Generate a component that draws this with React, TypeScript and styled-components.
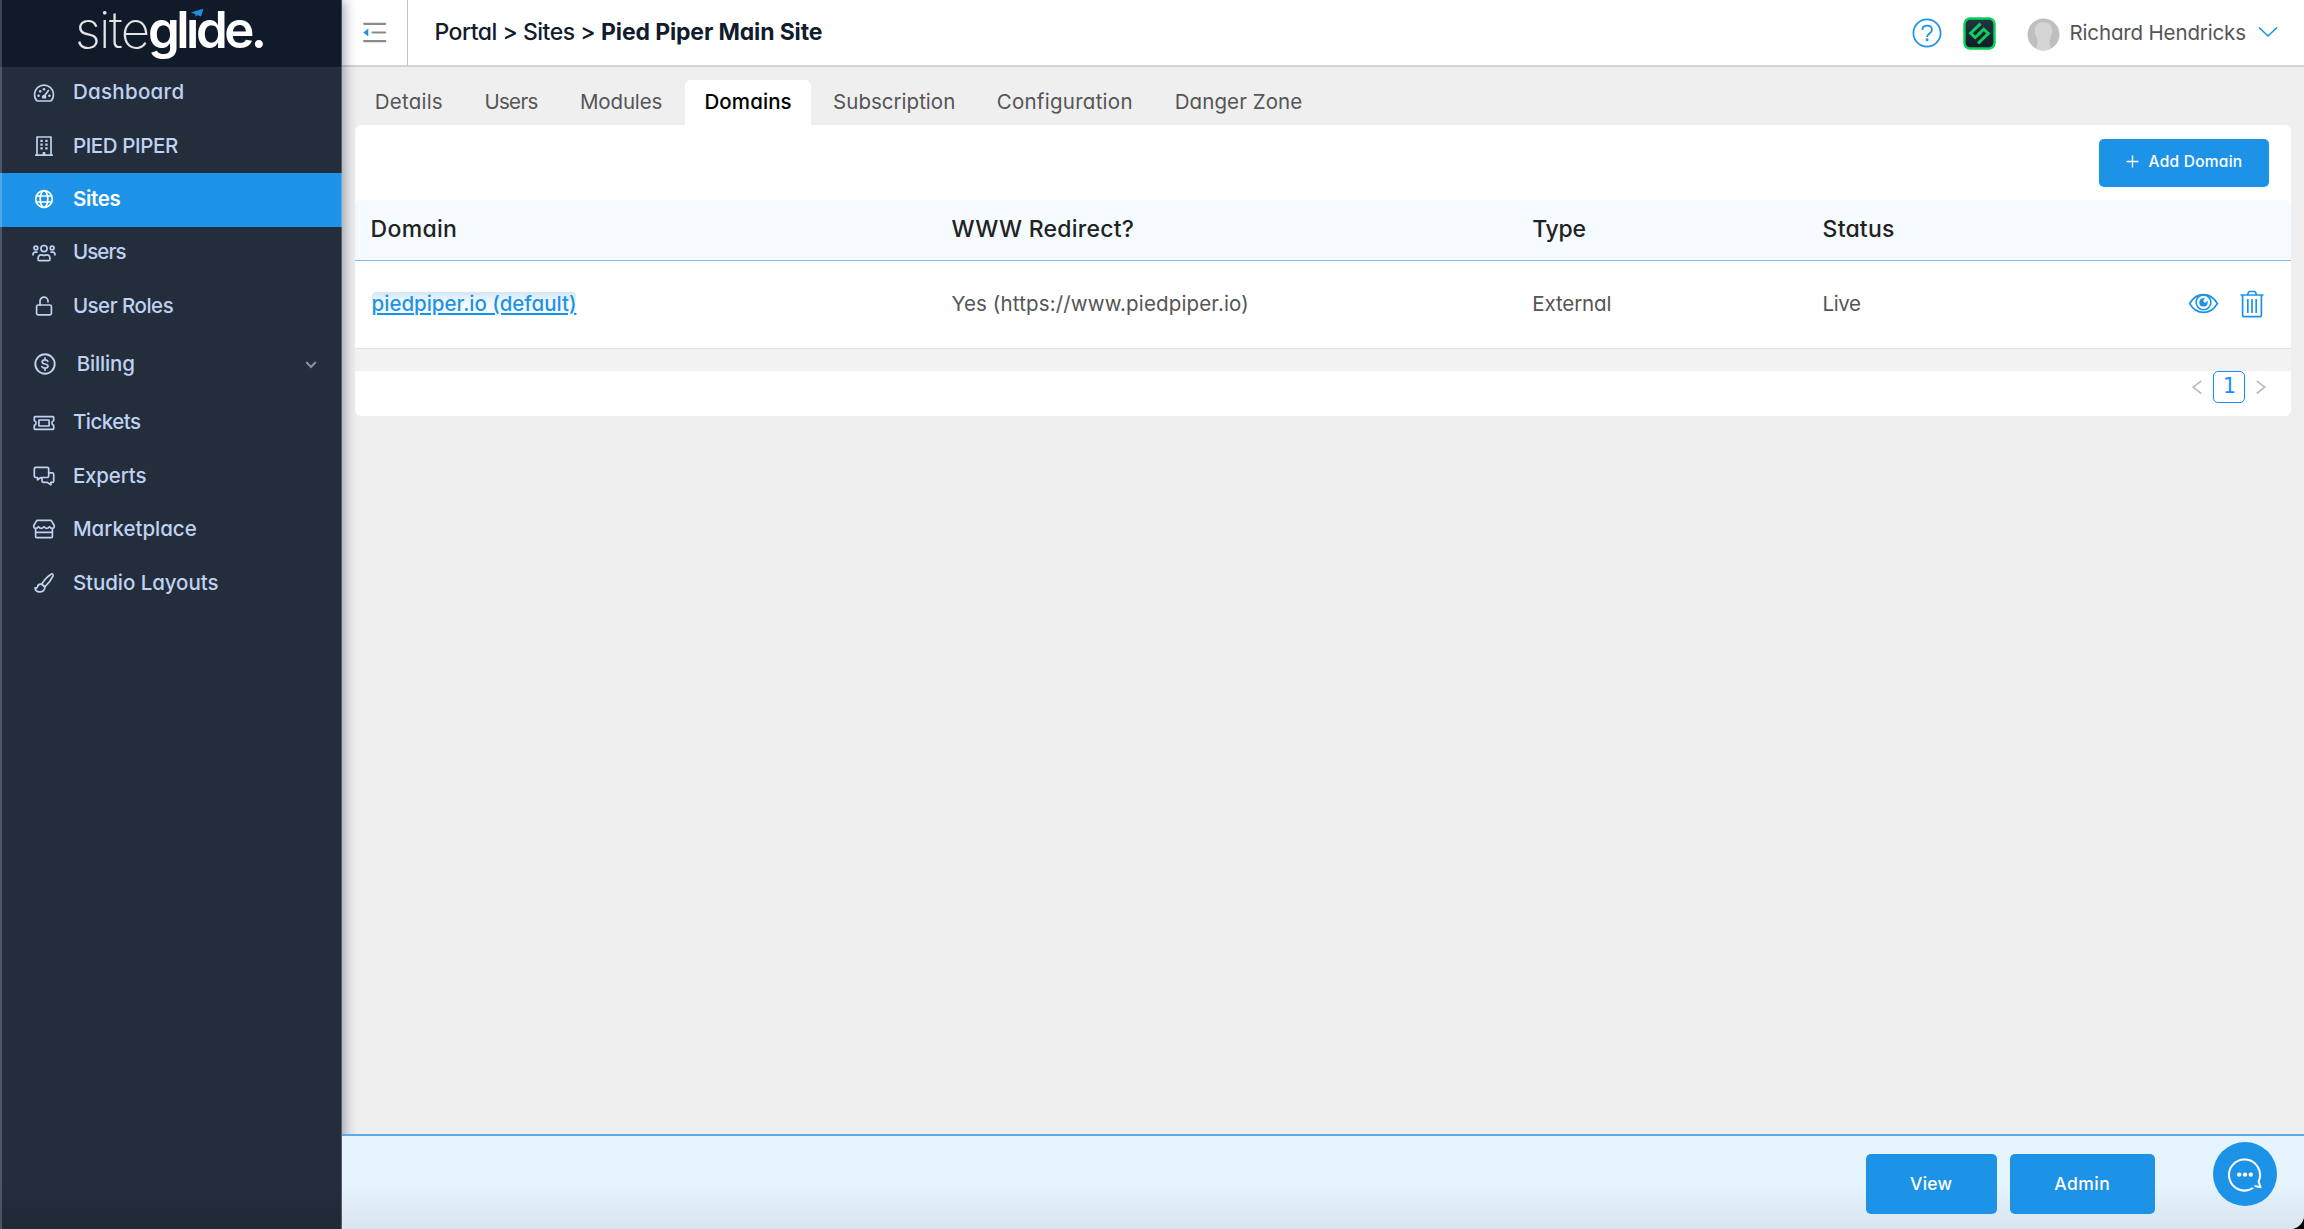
import React from 'react';
import styled, { createGlobalStyle } from 'styled-components';

const blue = '#1d93e7';

const GlobalStyle = createGlobalStyle`
  *, *::before, *::after { box-sizing: border-box; }
  html, body { margin: 0; height: 100%; background: #000; }
  body {
    font-family: Inter, "Liberation Sans", sans-serif;
    font-feature-settings: 'cv11';
    -webkit-font-smoothing: antialiased;
  }
`;

const Shell = styled.div`
  display: flex;
  width: 2304px;
  height: 1229px;
  overflow: hidden;
  background: #efefef;
  border-bottom-right-radius: 14px;
`;

/* Sidebar */
const Sidebar = styled.aside`
  position: relative;
  z-index: 1;
  flex: none;
  width: 341.5px;
  display: flex;
  flex-direction: column;
  background: linear-gradient(#242d3b 0, #242d3b 96.5%, #202936 100%);
  box-shadow: 2px 0 12px rgba(20, 26, 60, 0.42);
  &::before {
    content: '';
    position: absolute;
    inset: 0 auto 0 0;
    width: 2px;
    background: rgba(255, 255, 255, 0.2);
  }
  &::after {
    content: '';
    position: absolute;
    inset: 0 0 0 auto;
    width: 1px;
    background: rgba(255, 255, 255, 0.25);
  }
`;
const Brand = styled.div`
  height: 66.5px;
  background: #101a28;
  flex: none;
`;
const LogoArt = styled.svg`
  display: block;
  overflow: visible;
`;
const Nav = styled.nav`
  display: flex;
  flex-direction: column;
`;
const NavItem = styled.a<{ $active?: boolean; $tall?: boolean }>`
  display: flex;
  align-items: center;
  height: ${p => (p.$tall ? 63.4 : 53.35)}px;
  padding: 0 25px 1px ${p => (p.$tall ? 33.3 : 31.5)}px;
  gap: ${p => (p.$tall ? 19.4 : 17.4)}px;
  color: ${p => (p.$active ? '#fff' : '#bfd2f2')};
  background: ${p => (p.$active ? blue : 'transparent')};
  font-weight: ${p => (p.$active ? 600 : 500)};
`;
const NavIcon = styled.svg`
  width: 24px;
  height: 24px;
  flex: none;
  fill: none;
  stroke: currentColor;
  stroke-width: 1.7;
  stroke-linejoin: round;
  stroke-linecap: round;
`;
const NavLabel = styled.span<{ $ls: number }>`
  flex: 1;
  font-size: 20.5px;
  line-height: 26px;
  padding-bottom: 0.6px;
  letter-spacing: ${p => p.$ls}px;
  white-space: nowrap;
`;
const NavCaret = styled.svg`
  width: 12px;
  height: 12px;
  margin-top: 2px;
  fill: none;
  stroke: #8793a3;
  stroke-width: 2;
`;

/* Main column */
const Main = styled.div`
  flex: 1;
  min-width: 0;
  display: flex;
  flex-direction: column;
`;
const Header = styled.header`
  flex: none;
  height: 67px;
  display: flex;
  align-items: center;
  background: #fff;
  border-bottom: 2px solid #d2d2d2;
`;
const Collapse = styled.button`
  width: 66.5px;
  height: 65px;
  flex: none;
  display: flex;
  align-items: center;
  padding: 1px 0 0 21px;
  border: 0;
  border-right: 1px solid #c4c4c4;
  background: none;
`;
const Crumbs = styled.div`
  flex: 1;
  display: flex;
  align-items: center;
  gap: 6px;
  padding: 0 0 1.5px 26.4px;
  font-size: 23px;
  line-height: 30px;
  color: #111c2c;
  white-space: pre;
`;
const Crumb = styled.span`
  font-weight: 450;
  letter-spacing: -0.5px;
`;
const CrumbCurrent = styled.strong`
  font-weight: 700;
  letter-spacing: -0.14px;
`;
const UserArea = styled.div`
  display: flex;
  align-items: center;
  padding-right: 26px;
`;
const HelpIcon = styled.svg`
  width: 30px;
  height: 30px;
  margin-right: 20.5px;
`;
const BadgeIcon = styled.svg`
  width: 33px;
  height: 33px;
  margin: 1px 31px 0 0;
`;
const Avatar = styled.svg`
  width: 33px;
  height: 33px;
  margin: 3px 10px 0 0;
`;
const UserName = styled.span`
  font-size: 20.5px;
  line-height: 26px;
  color: #555;
  letter-spacing: -0.15px;
  width: 188.5px;
  white-space: nowrap;
`;
const UserCaret = styled.svg`
  width: 20px;
  height: 12px;
  margin-bottom: 1px;
`;

/* Tabs */
const Content = styled.main`
  flex: 1;
  padding: 13px 13px 0 13.5px;
`;
const Tabs = styled.div`
  display: flex;
  gap: 2.6px;
`;
const Tab = styled.a<{ $w: number; $ls: number; $active?: boolean }>`
  width: ${p => p.$w}px;
  height: 45px;
  padding: 0 0 2px 19.8px;
  display: flex;
  align-items: center;
  font-size: 20.5px;
  font-weight: ${p => (p.$active ? 500 : 400)};
  letter-spacing: ${p => p.$ls}px;
  white-space: nowrap;
  color: ${p => (p.$active ? '#000' : '#555')};
  background: ${p => (p.$active ? '#fff' : 'transparent')};
  border-radius: 6px 6px 0 0;
`;

/* Domain panel */
const Panel = styled.section`
  width: 1936px;
  border-radius: 6px;
  background: #fff;
  overflow: hidden;
`;
const PanelToolbar = styled.div`
  height: 75px;
  display: flex;
  justify-content: flex-end;
  align-items: flex-start;
  padding: 13.6px 21.8px 0 0;
`;
const Button = styled.button<{ $w: number; $h: number; $size: number; $ls: number }>`
  width: ${p => p.$w}px;
  height: ${p => p.$h}px;
  display: flex;
  align-items: center;
  justify-content: center;
  gap: 10px;
  padding: 0 0 1.5px;
  border: 0;
  border-radius: 5px;
  background: ${blue};
  color: #fff;
  font-family: inherit;
  font-feature-settings: inherit;
  font-size: ${p => p.$size}px;
  font-weight: 500;
  letter-spacing: ${p => p.$ls}px;
`;
const PlusIcon = styled.svg`
  width: 13px;
  height: 13px;
`;
const HeadRow = styled.div`
  display: grid;
  grid-template-columns: 30% 30% 15% 25%;
  align-items: center;
  height: 61px;
  padding-bottom: 2.5px;
  background: #f5fbff;
  border-bottom: 1px solid #82bff3;
  border-radius: 6px 6px 0 0;
`;
const HeadCell = styled.div<{ $ls: number }>`
  padding-left: 15.6px;
  font-size: 23px;
  font-weight: 450;
  color: #222;
  letter-spacing: ${p => p.$ls}px;
`;
const BodyRow = styled.div`
  display: grid;
  grid-template-columns: 30% 30% 15% 15% 10%;
  align-items: center;
  height: 87.5px;
  border-bottom: 1px solid #e2e2e2;
`;
const Cell = styled.div<{ $ls?: number }>`
  padding: 0 0 1px 15.6px;
  font-size: 20.5px;
  line-height: 26px;
  color: #555;
  letter-spacing: ${p => p.$ls ?? 0}px;
  white-space: nowrap;
`;
const DomainLink = styled.a`
  display: inline-block;
  margin-left: 1px;
  height: 24px;
  line-height: 23px;
  color: ${blue};
  font-weight: 450;
  text-decoration: underline;
  text-decoration-thickness: 2px;
  text-underline-offset: 2px;
  border-radius: 4px;
  background: linear-gradient(#d2e7f8, #f4faff 45%, #f8fcff);
`;
const Actions = styled.div`
  display: flex;
  align-items: center;
  justify-content: flex-end;
  gap: 21px;
  padding: 0 26.5px 1px 0;
`;
const EyeIcon = styled.svg`
  width: 31px;
  height: 23px;
`;
const TrashIcon = styled.svg`
  width: 24px;
  height: 28px;
`;
const Divider = styled.div`
  height: 22px;
  background: #f2f2f2;
`;
const Pagination = styled.div`
  height: 45px;
  display: flex;
  justify-content: flex-end;
  align-items: flex-start;
  gap: 11px;
  padding-right: 24.6px;
`;
const PageNumber = styled.span`
  width: 32px;
  height: 32px;
  border: 1.5px solid #1a8cff;
  border-radius: 5px;
  color: #1a8cff;
  display: flex;
  align-items: center;
  justify-content: center;
  padding-bottom: 2px;
  font: 20.5px "DejaVu Sans", sans-serif;
`;
const PageArrow = styled.svg`
  width: 10px;
  height: 32px;
  fill: none;
  stroke: #bdbdbd;
  stroke-width: 1.6;
`;

/* Footer */
const Footer = styled.footer`
  position: relative;
  z-index: 2;
  flex: none;
  height: 95px;
  display: flex;
  align-items: flex-start;
  justify-content: flex-end;
  gap: 13px;
  padding: 18px 26.8px 0 0;
  border-top: 2px solid #5caae8;
  background: linear-gradient(#e6f4fe 0, #e6f4fe 50%, #d9e5ef 100%);
`;
const Chat = styled.button`
  width: 64px;
  height: 64px;
  margin: -12px 0 0 45.5px;
  padding: 0;
  border: 0;
  border-radius: 50%;
  background: ${blue};
  display: flex;
  align-items: center;
  justify-content: center;
`;

const icons: Record<string, React.ReactNode> = {
  dashboard: (
    <>
      <path d="M4.6 19.6A9.5 9.5 0 1 1 19.4 19.6Q19.1 20 18.5 20H5.5Q4.9 20 4.6 19.6Z" />
      <path d="M12.8 14.6l3.6-5.2" />
      <g fill="currentColor" stroke="none">
        <circle cx="12.1" cy="15.6" r="1.5" />
        <circle cx="6.6" cy="14.8" r="1.3" /><circle cx="8.2" cy="10.2" r="1.3" />
        <circle cx="12" cy="8.3" r="1.3" /><circle cx="17.4" cy="14.8" r="1.3" />
        <path d="M10.3 17.6a2.3 2.3 0 1 1 3.6 0z" />
      </g>
    </>
  ),
  building: (
    <>
      <path d="M5 21V3h14v18M3.8 21.2h16.4" />
      <path d="M8.4 6.8h2.3M13.3 6.8h2.3M8.4 10.6h2.3M13.3 10.6h2.3M8.4 14.4h2.3M13.3 14.4h2.3" strokeWidth="2.3" strokeLinecap="butt" />
      <path d="M12 18v3" strokeWidth="2.6" strokeLinecap="butt" />
    </>
  ),
  globe: (
    <>
      <circle cx="12" cy="12" r="8.3" /><ellipse cx="12" cy="12" rx="3.8" ry="8.3" />
      <path d="M4.4 9h15.2M4.4 15h15.2" />
    </>
  ),
  users: (
    <>
      <circle cx="12" cy="7.6" r="3.1" /><circle cx="3.9" cy="7" r="1.9" /><circle cx="20.1" cy="7" r="1.9" />
      <path d="M6 18.2c0-3 1.2-4.3 3-4.3 1 0 1.8.5 3 .5s2-.5 3-.5c1.8 0 3 1.3 3 4.3 0 1.2-.6 1.5-1.5 1.5h-9c-.9 0-1.5-.3-1.5-1.5z" />
      <path d="M1 13.8c0-1.9.8-2.7 2.3-2.7h1.7M23 13.8c0-1.9-.8-2.7-2.3-2.7H19" />
    </>
  ),
  lock: (
    <>
      <rect x="4.6" y="11" width="14.8" height="9.8" rx="1.5" />
      <path d="M8 11V7.2a4 4 0 0 1 8 0v.6" />
    </>
  ),
  dollar: (
    <>
      <circle cx="12" cy="12" r="9.7" strokeWidth="1.9" />
      <path d="M14.9 9.3c-.5-1-1.6-1.4-2.9-1.4-1.7 0-2.8.8-2.8 2 0 2.8 5.8 1.3 5.8 4.2 0 1.3-1.2 2.1-3 2.1-1.5 0-2.6-.6-3.1-1.6M12 5.9v2M12 16.2v2" />
    </>
  ),
  ticket: (
    <>
      <path d="M3.3 5.6h17.4q1 0 1 1v3a2.5 2.5 0 0 0 0 4.8v3q0 1-1 1H3.3q-1 0-1-1v-3a2.5 2.5 0 0 0 0-4.8v-3q0-1 1-1z" />
      <rect x="6.9" y="9" width="10.2" height="6" rx=".4" />
    </>
  ),
  comments: (
    <>
      <path d="M8.5 13.8l-3 2v-2.3H3.8q-1.5 0-1.5-1.5V4.8q0-1.5 1.5-1.5h11.4q1.5 0 1.5 1.5V12q0 1.5-1.5 1.5H9" />
      <path d="M16.7 8.9h3.5q1.5 0 1.5 1.5v6.5q0 1.5-1.5 1.5h-1.4v2.3l-3.5-2.3H11.5q-1.5 0-1.5-1.5v-3" />
    </>
  ),
  store: (
    <>
      <path d="M4.8 3.3h14.4l3 5.2c.5 1.6-.6 2.9-2 2.9-1.3 0-2.1-.9-2.7-1.7-.6.8-1.5 1.7-2.7 1.7-1.3 0-2.1-.9-2.8-1.7-.7.8-1.5 1.7-2.8 1.7-1.2 0-2.1-.9-2.7-1.7-.6.8-1.4 1.7-2.7 1.7-1.4 0-2.5-1.3-2-2.9z" />
      <path d="M3.6 11.6v8q0 1.1 1.1 1.1h14.6q1.1 0 1.1-1.1v-8M3.6 15.4h16.8" />
    </>
  ),
  brush: (
    <>
      <path d="M9.6 13.2C12 9.5 16 5 19 3.2c1.6-.7 2.5.3 1.9 1.9-1.5 3.3-4.8 7.7-8.1 10.8z" />
      <path d="M9.6 13.2c-2.7-.3-3.9 1.2-4.1 2.6-.2 1.2-1.2 1.5-2.5 1.1.3 2.7 2.1 4 4.6 4 3.2 0 5.4-2 5.2-5z" />
    </>
  ),
};

const navItems: { label: string; icon: string; ls: number; active?: boolean; tall?: boolean }[] = [
  { label: 'Dashboard', icon: 'dashboard', ls: 0.3 },
  { label: 'PIED PIPER', icon: 'building', ls: -0.38 },
  { label: 'Sites', icon: 'globe', ls: -0.3, active: true },
  { label: 'Users', icon: 'users', ls: -0.9 },
  { label: 'User Roles', icon: 'lock', ls: -0.5 },
  { label: 'Billing', icon: 'dollar', ls: -0.15, tall: true },
  { label: 'Tickets', icon: 'ticket', ls: -0.5 },
  { label: 'Experts', icon: 'comments', ls: -0.18 },
  { label: 'Marketplace', icon: 'store', ls: -0.02 },
  { label: 'Studio Layouts', icon: 'brush', ls: -0.07 },
];

const tabs: { label: string; w: number; ls: number; active?: boolean }[] = [
  { label: 'Details', w: 107, ls: 0.22 },
  { label: 'Users', w: 93, ls: -0.68 },
  { label: 'Modules', w: 121.9, ls: -0.15 },
  { label: 'Domains', w: 126, ls: 0.1, active: true },
  { label: 'Subscription', w: 161, ls: 0.02 },
  { label: 'Configuration', w: 175.5, ls: 0.27 },
  { label: 'Danger Zone', w: 167, ls: 0.08 },
];

const Logo = () => (
  <LogoArt width="341" height="66" viewBox="0 0 341 66">
    <text x="75" y="48" fontSize="51" fontWeight="250" fill="#e4e4e4" textLength="75" lengthAdjust="spacing">site</text>
    <text x="148" y="48" fontSize="51" fontWeight="600" fill="#fff" textLength="119" lengthAdjust="spacing">glıde.</text>
    <path d="M191 12.5L203.3 8.7 201 16.5 197.5 15 195.6 16.8 195.3 14z" fill={blue} />
  </LogoArt>
);

export default function App() {
  return (
    <>
      <GlobalStyle />
      <Shell>
        <Sidebar>
          <Brand><Logo /></Brand>
          <Nav>
            {navItems.map(n => (
              <NavItem key={n.label} $active={n.active} $tall={n.tall}>
                <NavIcon viewBox="0 0 24 24">{icons[n.icon]}</NavIcon>
                <NavLabel $ls={n.ls}>{n.label}</NavLabel>
                {n.tall && <NavCaret viewBox="0 0 12 12"><path d="M1.2 3l4.8 5 4.8-5" /></NavCaret>}
              </NavItem>
            ))}
          </Nav>
        </Sidebar>
        <Main>
          <Header>
            <Collapse>
              <svg width="24" height="22" viewBox="0 0 24 22">
                <path d="M1.2 1.8h21M9.5 10.5h12.7M1.2 19.2h21" stroke="#8a8a8a" strokeWidth="2.2" strokeLinecap="round" />
                <path d="M.3 10.5l5-4v8z" fill={blue} />
              </svg>
            </Collapse>
            <Crumbs>
              <Crumb>Portal &gt; Sites &gt;</Crumb>
              <CrumbCurrent>Pied Piper Main Site</CrumbCurrent>
            </Crumbs>
            <UserArea>
              <HelpIcon viewBox="0 0 30 30" fill="none" stroke={blue}>
                <circle cx="15" cy="15" r="13.6" strokeWidth="1.7" />
                <path d="M10.3 12.1c0-2.7 2-4.5 4.8-4.5s4.8 1.7 4.8 4.2c0 3.6-4.8 3.7-4.8 7.2" strokeWidth="1.8" />
                <circle cx="15.1" cy="21.7" r="1.5" fill={blue} stroke="none" />
              </HelpIcon>
              <BadgeIcon viewBox="0 0 33 33" fill="none">
                <defs>
                  <linearGradient id="badge" x1="0" y1="0" x2="0" y2="1">
                    <stop offset="0" stopColor="#243545" /><stop offset="1" stopColor="#111b29" />
                  </linearGradient>
                </defs>
                <rect x="1.5" y="1.5" width="30" height="30" rx="5.5" fill="url(#badge)" stroke="#06d158" strokeWidth="2.4" />
                <path d="M17.6 6.6L7.6 16.2 12.2 20.6 18 15.2M15 26.4L25.4 16.6 20.8 12.2 15 17.6" stroke="#0fcf5c" strokeWidth="2.9" />
              </BadgeIcon>
              <Avatar viewBox="0 0 33 33">
                <defs><clipPath id="face"><circle cx="16.5" cy="16.5" r="16" /></clipPath></defs>
                <g clipPath="url(#face)">
                  <rect width="33" height="33" fill="#bfbfbd" />
                  <path d="M8 12c0-5 3.5-8 8.5-8S25 7 25 12c.8 1.5.4 4-1 5-.4 3-1.5 5-1.5 7 0 4 1.5 6 2 9h-16c.5-3 2-5 2-9 0-2-1.1-4-1.5-7-1.4-1-1.8-3.5-1-5z" fill="#d5d5d5" />
                </g>
              </Avatar>
              <UserName>Richard Hendricks</UserName>
              <UserCaret viewBox="0 0 20 12"><path d="M1 1.5l9 8.5 9-8.5" fill="none" stroke={blue} strokeWidth="1.6" /></UserCaret>
            </UserArea>
          </Header>
          <Content>
            <Tabs>
              {tabs.map(t => (
                <Tab key={t.label} $w={t.w} $ls={t.ls} $active={t.active}>{t.label}</Tab>
              ))}
            </Tabs>
            <Panel>
              <PanelToolbar>
                <Button $w={170.5} $h={48} $size={15.5} $ls={0.26}>
                  <PlusIcon viewBox="0 0 13 13"><path d="M6.5 .5v12M.5 6.5h12" stroke="#fff" strokeWidth="1.4" /></PlusIcon>
                  Add Domain
                </Button>
              </PanelToolbar>
              <HeadRow>
                <HeadCell $ls={0.3}>Domain</HeadCell>
                <HeadCell $ls={0.24}>WWW Redirect?</HeadCell>
                <HeadCell $ls={-0.2}>Type</HeadCell>
                <HeadCell $ls={0.2}>Status</HeadCell>
              </HeadRow>
              <BodyRow>
                <Cell $ls={-0.02}><DomainLink>piedpiper.io (default)</DomainLink></Cell>
                <Cell $ls={0.15}>Yes (https://www.piedpiper.io)</Cell>
                <Cell $ls={-0.1}>External</Cell>
                <Cell $ls={-0.45}>Live</Cell>
                <Actions>
                  <EyeIcon viewBox="0 0 32 24" fill="none" stroke={blue} strokeWidth="1.7">
                    <path d="M1.5 12C5 6 10 2.7 16 2.7S27 6 30.5 12C27 18 22 21.3 16 21.3S5 18 1.5 12z" />
                    <circle cx="16" cy="10.8" r="7.7" />
                    <path d="M15.7 7.4a3.5 3.5 0 1 0 3.8 3.5 2 2 0 0 1-3.8-3.5z" fill={blue} />
                  </EyeIcon>
                  <TrashIcon viewBox="0 0 24 28" fill="none" stroke={blue} strokeWidth="1.7">
                    <path d="M.5 5h23M2.6 5v20q0 1.7 1.7 1.7h15.4q1.7 0 1.7-1.7V5M7.3 5l1.2-2.5q.5-1 1.5-1h4q1 0 1.5 1L16.7 5M7.8 9v14M12 9v14M16.2 9v14" />
                  </TrashIcon>
                </Actions>
              </BodyRow>
              <Divider />
              <Pagination>
                <PageArrow viewBox="0 0 10 32"><path d="M9.3 10L1.2 16.2 9.3 22.5" /></PageArrow>
                <PageNumber>1</PageNumber>
                <PageArrow viewBox="0 0 10 32"><path d="M.7 10l8.1 6.2L.7 22.5" /></PageArrow>
              </Pagination>
            </Panel>
          </Content>
          <Footer>
            <Button $w={131} $h={60} $size={17.5} $ls={0.22}>View</Button>
            <Button $w={145} $h={60} $size={17.5} $ls={0.5}>Admin</Button>
            <Chat>
              <svg width="36" height="36" viewBox="0 0 36 36" fill="none">
                <path d="M26 32A15.5 15.5 0 1 1 31.6 25.5L33.5 31.3 27.5 30" stroke="#fff" strokeWidth="2" strokeLinejoin="round" />
                <g fill="#fff"><circle cx="12.2" cy="18.6" r="2.2" /><circle cx="18" cy="18.6" r="2.2" /><circle cx="23.8" cy="18.6" r="2.2" /></g>
              </svg>
            </Chat>
          </Footer>
        </Main>
      </Shell>
    </>
  );
}
